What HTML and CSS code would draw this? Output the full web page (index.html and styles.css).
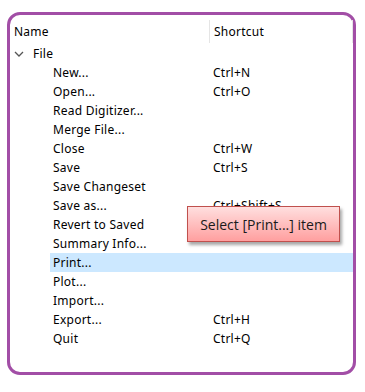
FILE: index.html
```html
<!DOCTYPE html>
<html lang="en">
  <head>
    <meta charset="UTF-8" />
    <title>Menu Tree</title>
    <link rel="stylesheet" href="styles.css">
  </head>
  <body>
    <div class="frame">
      <div class="header">
        <div class="col-name">Name</div>
        <div class="col-shortcut">Shortcut</div>
      </div>

      <div class="group">
        <svg class="chevron" width="10" height="6" viewBox="0 0 10 6">
          <path d="M1 1 L5 5 L9 1" fill="none" stroke="#555" stroke-width="1.3" />
        </svg>
        <span>File</span>
      </div>

      <div class="item"><span class="label">New...</span><span class="key">Ctrl+N</span></div>
      <div class="item"><span class="label">Open...</span><span class="key">Ctrl+O</span></div>
      <div class="item"><span class="label">Read Digitizer...</span><span class="key"></span></div>
      <div class="item"><span class="label">Merge File...</span><span class="key"></span></div>
      <div class="item"><span class="label">Close</span><span class="key">Ctrl+W</span></div>
      <div class="item"><span class="label">Save</span><span class="key">Ctrl+S</span></div>
      <div class="item"><span class="label">Save Changeset</span><span class="key"></span></div>
      <div class="item"><span class="label">Save as...</span><span class="key">Ctrl+Shift+S</span></div>
      <div class="item"><span class="label">Revert to Saved</span><span class="key"></span></div>
      <div class="item"><span class="label">Summary Info...</span><span class="key"></span></div>
      <div class="item selected"><span class="label">Print...</span><span class="key"></span></div>
      <div class="item"><span class="label">Plot...</span><span class="key"></span></div>
      <div class="item"><span class="label">Import...</span><span class="key"></span></div>
      <div class="item"><span class="label">Export...</span><span class="key">Ctrl+H</span></div>
      <div class="item"><span class="label">Quit</span><span class="key">Ctrl+Q</span></div>

      <!-- callout over the list -->
      <div class="callout">Select [Print...] item</div>
    </div>
  </body>
</html>
```

FILE: styles.css
```css
/* Page */
body {
  margin: 0;
  background-color: #ffffff;
  font-family: "Noto Sans", "Open Sans", sans-serif;
  font-size: 12px;
  letter-spacing: 0.25px;
  color: #000000;
}

.frame {
  position: relative;
  width: 343px;
  height: 357px;
  margin: 12px 0 0 7px;
  border: 3px solid #a24ea6;
  border-radius: 13px;
  box-sizing: content-box;
}

/* Column header */
.header {
  display: flex;
  height: 29px;
  align-items: center;
  padding-top: 3px;
  box-sizing: border-box;
}

.col-name {
  width: 195px;
  padding-left: 4px;
  box-sizing: content-box;
  line-height: 23px;
}

.col-shortcut {
  flex: 1;
  padding-left: 4px;
  line-height: 23px;
  border-left: 1px solid #e5e5e5;
  border-right: 1px solid #e5e5e5;
}

/* Tree rows */
.group {
  display: flex;
  align-items: center;
  height: 19px;
  padding-left: 4px;
}

.chevron {
  margin-right: 9px;
}

.item {
  display: flex;
  align-items: center;
  height: 19px;
  margin-left: 40px;
  padding-left: 3px;
}

.item .label {
  width: 160px;
}

.selected {
  background-color: #cce8ff;
}

/* Tooltip style callout */
.callout {
  position: absolute;
  left: 177px;
  top: 191px;
  width: 151px;
  height: 34px;
  display: flex;
  align-items: center;
  justify-content: center;
  border: 1px solid #c0504d;
  background: linear-gradient(to bottom, #ffdfdf, #ff9f9f);
  box-shadow: 2px 3px 3px rgba(0, 0, 0, 0.35);
  font-family: "Open Sans", sans-serif;
  font-size: 14px;
  letter-spacing: 0;
  color: #1a1a1a;
}
```
